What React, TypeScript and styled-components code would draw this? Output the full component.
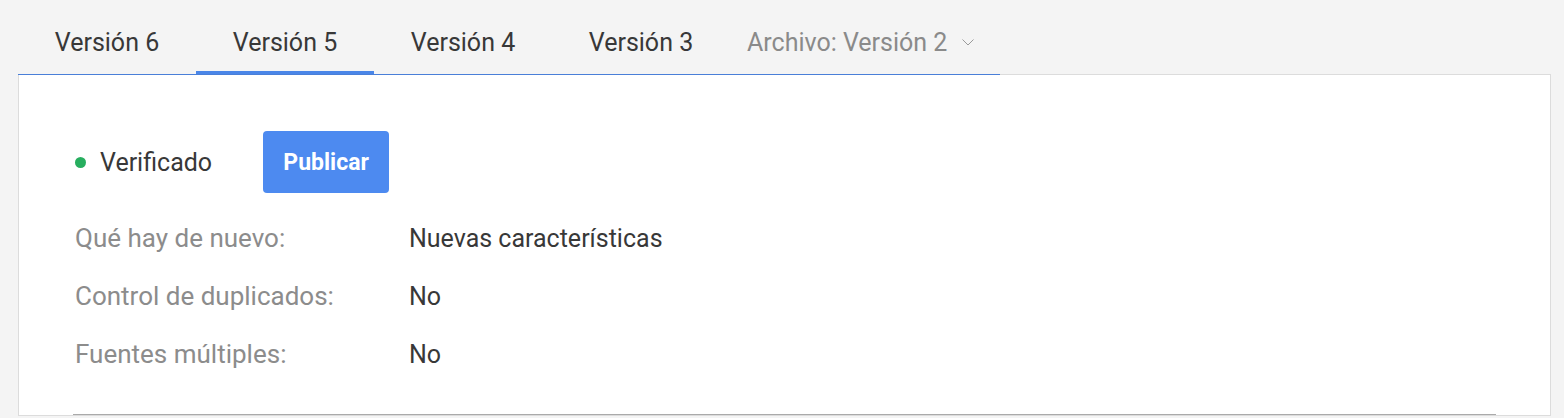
import styled, { createGlobalStyle } from 'styled-components';

const GlobalStyle = createGlobalStyle`
    body {
        margin: 0;
        background: #f4f4f4;
        font-family: Roboto, 'Liberation Sans', sans-serif;
    }
`;

const tabs = ['Versión 6', 'Versión 5', 'Versión 4', 'Versión 3'];

const rows = [
    { label: 'Qué hay de nuevo:', value: 'Nuevas características' },
    { label: 'Control de duplicados:', value: 'No' },
    { label: 'Fuentes múltiples:', value: 'No' },
];

const Chevron = () => (
    <svg width="12" height="7" viewBox="0 0 12 7" fill="none">
        <path d="M0.5 0.5L6 6L11.5 0.5" stroke="#9a9a9a" strokeWidth="1" />
    </svg>
);

const App = (): JSX.Element => {
    return (
        <Page>
            <GlobalStyle />
            <TabBar>
                {tabs.map((name) => (
                    <Tab key={name} $active={name == 'Versión 5'}>
                        {name}
                    </Tab>
                ))}
                <ArchiveTab>
                    Archivo: Versión 2
                    <Chevron />
                </ArchiveTab>
            </TabBar>
            <Panel>
                <StatusRow>
                    <Status>
                        <Dot />
                        Verificado
                    </Status>
                    <PublishButton>Publicar</PublishButton>
                </StatusRow>
                {rows.map((row) => (
                    <InfoRow key={row.label}>
                        <Label>{row.label}</Label>
                        <Value>{row.value}</Value>
                    </InfoRow>
                ))}
                <Divider />
            </Panel>
        </Page>
    );
};

const Page = styled.div`
    min-height: 100vh;
    padding: 0 13px 0 18px;
    box-sizing: border-box;
    overflow: hidden;
`;

const TabBar = styled.div`
    border-bottom: 1px solid #4a7fd8;
    display: flex;
    position: relative;
    width: fit-content;
    z-index: 1;
`;

const Tab = styled.div<{ $active?: boolean }>`
    box-shadow: ${(p) => (p.$active ? 'inset 0 -3px 0 #4a86e8' : 'none')};
    box-sizing: border-box;
    color: #383838;
    cursor: pointer;
    font-size: 25px;
    height: 74px;
    line-height: 30px;
    padding-top: 28px;
    text-align: center;
    width: 178px;
`;

const ArchiveTab = styled.div`
    align-items: flex-start;
    box-sizing: border-box;
    color: #8a8a8a;
    cursor: pointer;
    display: flex;
    font-size: 25px;
    gap: 15px;
    height: 74px;
    line-height: 30px;
    padding: 28px 26px 0 17px;

    svg {
        margin-top: 11px;
    }
`;

const Panel = styled.div`
    background: #fff;
    border: 1px solid #dcdcdc;
    margin-top: -1px;
    padding: 56px 54px 0;
`;

const StatusRow = styled.div`
    align-items: center;
    display: flex;
    gap: 51px;
    margin-bottom: 16px;
`;

const Status = styled.div`
    align-items: center;
    color: #383838;
    display: flex;
    font-size: 25px;
    gap: 14px;
`;

const Dot = styled.span`
    background: #27ae5f;
    border-radius: 50%;
    flex: none;
    height: 11px;
    margin-left: 2px;
    width: 11px;
`;

const PublishButton = styled.button`
    background: #4d8af0;
    border: none;
    border-radius: 4px;
    color: #fff;
    font-family: Roboto, 'Liberation Sans', sans-serif;
    font-size: 23px;
    font-weight: 700;
    height: 62px;
    padding: 0 19px;
    width: 126px;
`;

const InfoRow = styled.div`
    align-items: center;
    display: grid;
    font-size: 25px;
    grid-template-columns: 336px 1fr;
    height: 58px;
`;

const Label = styled.span`
    color: #8c8c8c;
    font-size: 26px;
    padding-left: 2px;
`;

const Value = styled.span`
    color: #383838;
`;

const Divider = styled.div`
    border-top: 1px solid #aaa;
    margin-top: 31px;
`;

export default App;
